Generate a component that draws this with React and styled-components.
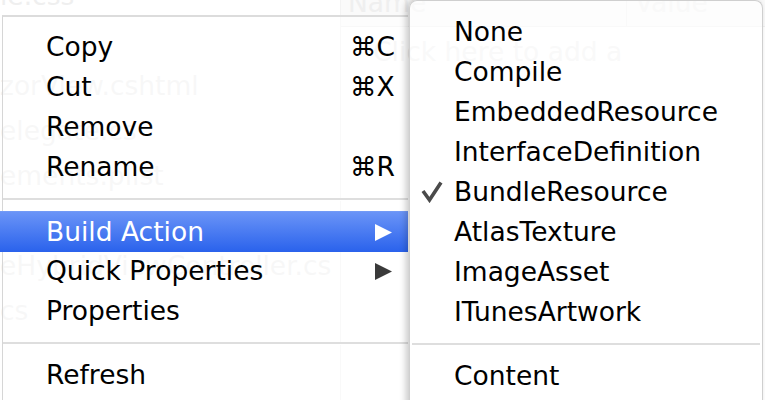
import styled, { createGlobalStyle } from "styled-components";

/* =========================
    data
========================= */

const FILES = [
  "le.css",
  "",
  "zorView.cshtml",
  "elegate.cs",
  "ements.plist",
  "",
  "eHybridViewController.cs",
  "cs",
];

const MAIN_ITEMS = [
  { label: "Copy", shortcut: "⌘C" },
  { label: "Cut", shortcut: "⌘X" },
  { label: "Remove" },
  { label: "Rename", shortcut: "⌘R" },
  { separator: true },
  { label: "Build Action", submenu: true, active: true },
  { label: "Quick Properties", submenu: true },
  { label: "Properties" },
  { separator: true },
  { label: "Refresh" },
];

const BUILD_ACTIONS = [
  { label: "None" },
  { label: "Compile" },
  { label: "EmbeddedResource" },
  { label: "InterfaceDefinition" },
  { label: "BundleResource", checked: true },
  { label: "AtlasTexture" },
  { label: "ImageAsset" },
  { label: "ITunesArtwork" },
  { separator: true },
  { label: "Content" },
];

/* =========================
    icons
========================= */

const Arrow = ({ color }) => (
  <svg width="17" height="17" viewBox="0 0 17 17">
    <polygon points="0,0 17,8.5 0,17" fill={color} />
  </svg>
);

const Check = () => (
  <svg width="22" height="22" viewBox="0 0 22 22">
    <path
      d="M2 10 L8.5 19 L20 1.5"
      fill="none"
      stroke="#4a4a4a"
      strokeWidth="3.6"
      strokeLinejoin="miter"
    />
  </svg>
);

/* =========================
    App
========================= */

export default function App() {
  return (
    <>
      <GlobalStyle />
      <Stage>
        <Window>
          <FileList>
            {FILES.map((name, i) => (
              <FileRow key={i}>{name}</FileRow>
            ))}
          </FileList>
          <PropertyPane>
            <GridHeader>
              <HeaderCell>Name</HeaderCell>
              <HeaderCell $last>Value</HeaderCell>
            </GridHeader>
            <AddRow>Click here to add a new property</AddRow>
          </PropertyPane>
        </Window>

        <ContextMenu>
          {MAIN_ITEMS.map((item, i) =>
            item.separator ? (
              <Separator key={i} />
            ) : (
              <MenuItem key={i} $active={item.active}>
                <span>{item.label}</span>
                <Trailing>
                  {item.shortcut}
                  {item.submenu && (
                    <ArrowSlot>
                      <Arrow color={item.active ? "#ffffff" : "#3a3a3a"} />
                    </ArrowSlot>
                  )}
                </Trailing>
              </MenuItem>
            )
          )}
        </ContextMenu>

        <SubMenu>
          {BUILD_ACTIONS.map((item, i) =>
            item.separator ? (
              <SubSeparator key={i} />
            ) : (
              <SubItem key={i}>
                <CheckSlot>{item.checked && <Check />}</CheckSlot>
                <span>{item.label}</span>
              </SubItem>
            )
          )}
        </SubMenu>
      </Stage>
    </>
  );
}

/* =========================
    styled-components
========================= */

const GlobalStyle = createGlobalStyle`
  html, body {
    margin: 0;
    padding: 0;
    background: #ffffff;
    overflow: hidden;
  }
  * {
    box-sizing: border-box;
  }
`;

const Stage = styled.div`
  position: relative;
  width: 765px;
  height: 400px;
  overflow: hidden;
  font-family: "DejaVu Sans", "Liberation Sans", sans-serif;
  font-size: 26.5px;
  background: #ffffff;
`;

/* ===== background window (faint, behind the menus) ===== */
const Window = styled.div`
  display: grid;
  grid-template-columns: 340px 1fr;
  height: 100%;
  color: #efefef;
`;

const FileList = styled.div`
  overflow: hidden;
  display: flex;
  flex-direction: column;
  margin-top: -27px;
`;

const FileRow = styled.div`
  height: 45px;
  line-height: 45px;
  white-space: nowrap;
  flex-shrink: 0;
`;

const PropertyPane = styled.div`
  border-left: 1px solid #f3f3f3;
  display: flex;
  flex-direction: column;
`;

const GridHeader = styled.div`
  display: grid;
  grid-template-columns: 286px 1fr;
  height: 27px;
  background: #fafafa;
  border-bottom: 1px solid #f0f0f0;
`;

const HeaderCell = styled.div`
  padding-left: ${(p) => (p.$last ? "8px" : "7px")};
  line-height: 6px;
  border-right: ${(p) => (p.$last ? "none" : "1px solid #f0f0f0")};
  overflow: hidden;
  white-space: nowrap;
`;

const AddRow = styled.div`
  width: 286px;
  height: 50px;
  line-height: 50px;
  padding-left: 32px;
  white-space: nowrap;
  overflow: hidden;
`;

/* ===== main context menu ===== */
const ContextMenu = styled.div`
  position: absolute;
  left: 2px;
  top: 15px;
  width: 406px;
  height: 400px;
  padding-top: 10px;
  background: rgba(255, 255, 255, 0.5);
  border-top: 2px solid #dcdcdc;
  border-left: 1px solid #d6d6d6;
  color: #000000;
`;

const MenuItem = styled.div`
  display: grid;
  grid-template-columns: 1fr 58px;
  align-items: center;
  height: 40px;
  line-height: 40px;
  padding-left: 43px;
  white-space: nowrap;

  ${(p) =>
    p.$active &&
    `
    height: 41px;
    margin: 0 0 -1px -3px;
    padding-left: 46px;
    color: #ffffff;
    background: linear-gradient(#6a94f7, #2a62ec);
    border-top: 1px solid #729af6;
  `}
`;

const Trailing = styled.span`
  display: flex;
  align-items: center;
`;

const ArrowSlot = styled.span`
  display: flex;
  padding-left: 25px;
`;

const Separator = styled.div`
  height: 24px;
  display: flex;
  align-items: center;

  &::after {
    content: "";
    flex: 1;
    height: 2px;
    background: #dedede;
    box-shadow: 0 1px 0 #ffffff;
  }
`;

/* ===== build action submenu ===== */
const SubMenu = styled.div`
  position: absolute;
  left: 409px;
  top: 0;
  width: 354px;
  height: 420px;
  padding-top: 11px;
  border-radius: 8px 8px 0 0;
  background: rgba(255, 255, 255, 0.6);
  border: 1px solid #cfcfcf;
  border-bottom: none;
  box-shadow: -3px 0 7px rgba(0, 0, 0, 0.22);
  color: #000000;
`;

const SubItem = styled.div`
  display: grid;
  grid-template-columns: 44px 1fr;
  align-items: center;
  height: 40px;
  line-height: 40px;
  white-space: nowrap;
`;

const CheckSlot = styled.span`
  display: flex;
  justify-content: flex-start;
  padding-left: 11px;
`;

const SubSeparator = styled(Separator)`
  padding: 0 2px;
`;
